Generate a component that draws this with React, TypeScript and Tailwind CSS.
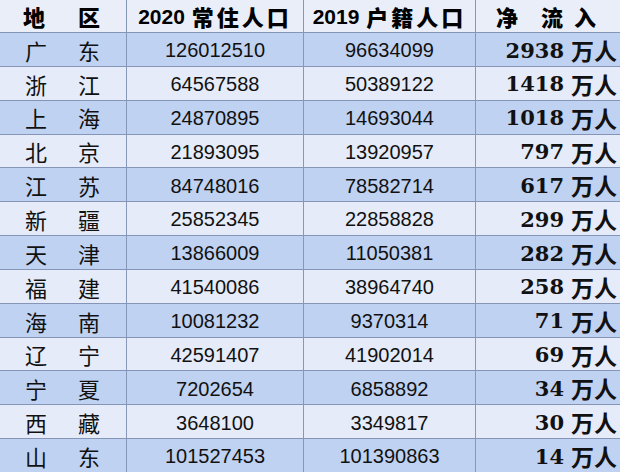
const rows: [string, string, string, string, string][] = [
  ["广", "东", "126012510", "96634099", "2938"],
  ["浙", "江", "64567588", "50389122", "1418"],
  ["上", "海", "24870895", "14693044", "1018"],
  ["北", "京", "21893095", "13920957", "797"],
  ["江", "苏", "84748016", "78582714", "617"],
  ["新", "疆", "25852345", "22858828", "299"],
  ["天", "津", "13866009", "11050381", "282"],
  ["福", "建", "41540086", "38964740", "258"],
  ["海", "南", "10081232", "9370314", "71"],
  ["辽", "宁", "42591407", "41902014", "69"],
  ["宁", "夏", "7202654", "6858892", "34"],
  ["西", "藏", "3648100", "3349817", "30"],
  ["山", "东", "101527453", "101390863", "14"],
]

const cjk = "font-['Noto_Sans_CJK_SC',sans-serif]"
const num = "font-['Liberation_Sans','Noto_Sans_CJK_SC',sans-serif]"
const cols = "grid grid-cols-[126px_177px_172px_145px]"

export default function App() {
  return (
    <div className="w-[620px] h-[472px] overflow-hidden bg-[#e6ecf8] text-[#111]">
      <div className={`${cols} h-[32px] bg-[#eaeef8] font-black text-black`}>
        <div className={`flex items-center justify-between pl-[23px] pr-[26px] text-[22px] ${cjk}`}>
          <span>地</span>
          <span>区</span>
        </div>
        <div className="flex items-center justify-center border-l border-[#8797b8]">
          <span className={`${num} font-bold text-[21px]`}>2020</span>
          <span className={`${cjk} text-[22px] tracking-[3px] ml-[7px]`}>常住人口</span>
        </div>
        <div className="flex items-center justify-center border-l border-[#8797b8]">
          <span className={`${num} font-bold text-[21px]`}>2019</span>
          <span className={`${cjk} text-[22px] tracking-[3px] ml-[7px]`}>户籍人口</span>
        </div>
        <div className={`flex items-center pl-[20px] border-l border-[#8797b8] text-[22px] ${cjk}`}>
          <span>净</span>
          <span className="ml-[23px]">流</span>
          <span className="ml-[11px]">入</span>
        </div>
      </div>
      {rows.map((r, i) => (
        <div
          key={i}
          className={`${cols} h-[33.85px] border-t border-[#8495b8] ${i % 2 === 0 ? "bg-[#c0d2f1]" : "bg-[#e5ebf8]"}`}
        >
          <div className={`flex items-center justify-between pl-[25px] pr-[26px] text-[22px] ${cjk}`}>
            <span>{r[0]}</span>
            <span>{r[1]}</span>
          </div>
          <div className={`flex items-center justify-center border-l border-[#8797b8] text-[20px] ${num}`}>{r[2]}</div>
          <div className={`flex items-center justify-center border-l border-[#8797b8] text-[20px] ${num}`}>{r[3]}</div>
          <div className="flex items-center justify-end pr-[3px] border-l border-[#8797b8]">
            <span className="font-['DejaVu_Serif',serif] font-bold text-[21px]">{r[4]}</span>
            <span className={`${cjk} font-bold text-[23px] ml-[7px]`}>万人</span>
          </div>
        </div>
      ))}
    </div>
  )
}
